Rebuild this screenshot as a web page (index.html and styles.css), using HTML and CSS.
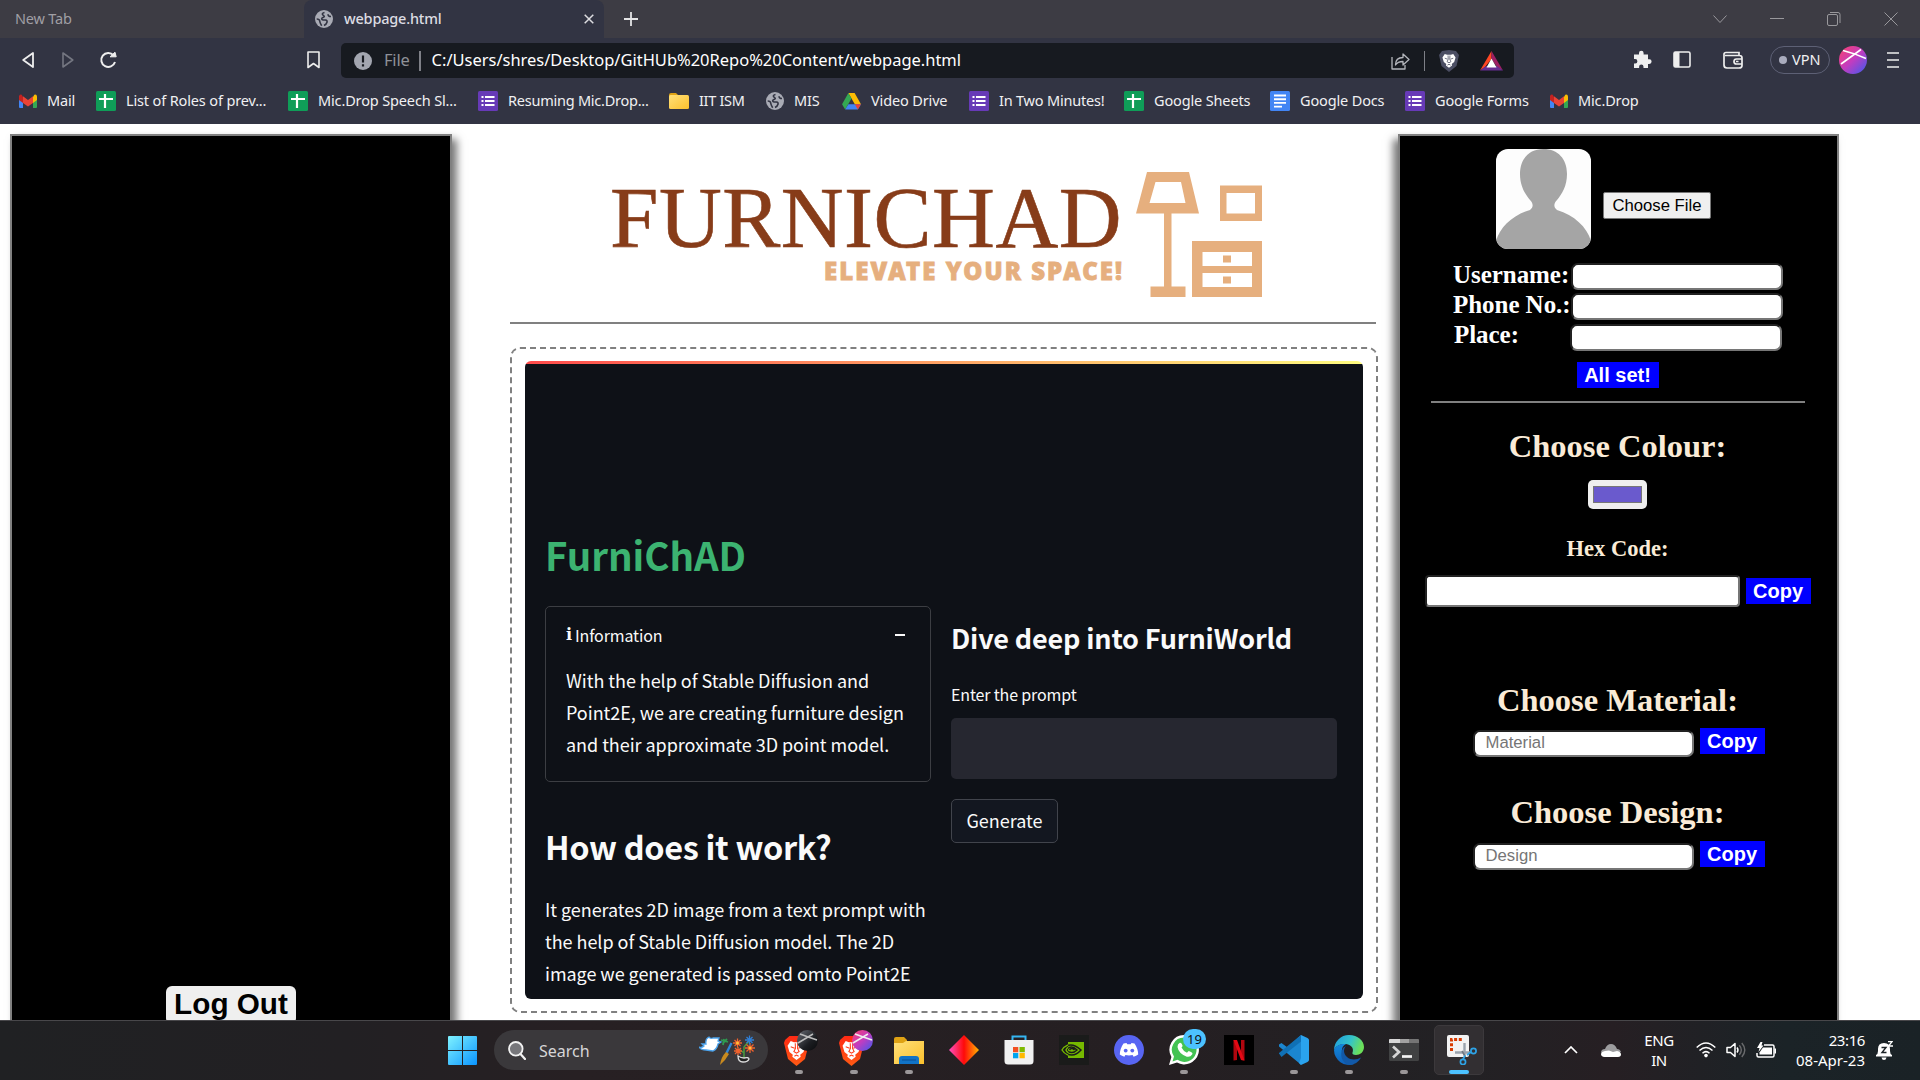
FILE: index.html
```html
<!DOCTYPE html>
<html lang="en">
<head>
<meta charset="utf-8">
<title>webpage.html</title>
<link rel="stylesheet" href="styles.css">
</head>
<body>
<svg class="defs" width="0" height="0">
  <defs>
    <linearGradient id="gWin" x1="0" y1="0" x2="1" y2="1"><stop offset="0" stop-color="#7ff2ff"/><stop offset="1" stop-color="#0a94ff"/></linearGradient>
    <linearGradient id="gPink" x1="0" y1="0" x2="1" y2="1"><stop offset="0.1" stop-color="#f0407c"/><stop offset="0.5" stop-color="#c23cc0"/><stop offset="1" stop-color="#3a5bf0"/></linearGradient>
    <linearGradient id="gDark" x1="0" y1="0" x2="1" y2="1"><stop offset="0" stop-color="#6c7078"/><stop offset="0.6" stop-color="#1c1e22"/><stop offset="1" stop-color="#08090b"/></linearGradient>
    <linearGradient id="gBrave" x1="0" y1="0" x2="0" y2="1"><stop offset="0" stop-color="#ff2a14"/><stop offset="1" stop-color="#ff5a14"/></linearGradient>
    <linearGradient id="gFolder" x1="0" y1="0" x2="1" y2="1"><stop offset="0" stop-color="#ffe07a"/><stop offset="1" stop-color="#fbc02c"/></linearGradient>
    <linearGradient id="gDia" x1="0" y1="0" x2="1" y2="0"><stop offset="0" stop-color="#ff4fc0"/><stop offset="0.5" stop-color="#ff0a0a"/><stop offset="1" stop-color="#ffb400"/></linearGradient>
    <linearGradient id="gEdge" x1="0" y1="0" x2="1" y2="0.3"><stop offset="0" stop-color="#1e9be0"/><stop offset="0.6" stop-color="#35c4c8"/><stop offset="1" stop-color="#6be05a"/></linearGradient>
    <linearGradient id="gEdgeB" x1="0" y1="0" x2="0" y2="1"><stop offset="0" stop-color="#1389dc"/><stop offset="1" stop-color="#0f5fb8"/></linearGradient>
    <symbol id="globe" viewBox="0 0 18 18"><circle cx="9" cy="9" r="9" fill="#a9abb5"/><path d="M9.500 2.500C7 3 6.800 4.300 8.300 5.300S9.500 7 8 7.500 6 9.500 8 10h2.500q2 .3 1.500 2.300T9 15.500M1.700 9q2.800 0 3 2t2 4.800M13 4.200c0 1.500 1 2.300 3 2.300" fill="none" stroke="#323443" stroke-width="1.600"/></symbol>
    <symbol id="gmail" viewBox="0 0 18 14"><path d="M0 2v11q0 1 1 1h3V5z" fill="#4285f4"/><path d="M18 2v11q0 1-1 1h-3V5z" fill="#34a853"/><path d="M0 2.500V6l4 3V3L2.700.7Q.3-.3 0 2.500" fill="#c5221f"/><path d="M18 2.500V6l-4 3V3L15.300.7Q17.700-.3 18 2.500" fill="#fbbc04"/><path d="M4 2.200 9 6l5-3.800V9l-5 3.600L4 9z" fill="#ea4335"/></symbol>
    <symbol id="sheets" viewBox="0 0 20 20"><rect width="20" height="20" rx="1.500" fill="#0f9d58"/><path d="M9 3v14M3 8h14" stroke="#fff" stroke-width="2.200"/></symbol>
    <symbol id="forms" viewBox="0 0 20 20"><rect width="20" height="20" rx="1.500" fill="#673ab7"/><path d="M3.500 6h2M3.500 10h2M3.500 14h2M7 6h9.500M7 10h9.500M7 14h9.500" stroke="#fff" stroke-width="2.200"/></symbol>
    <symbol id="docs" viewBox="0 0 20 20"><rect width="20" height="20" rx="1.500" fill="#4285f4"/><path d="M4 4.500h12M4 8.200h12M4 11.900h12M4 15.600h8" stroke="#fff" stroke-width="1.900"/></symbol>
    <symbol id="folder" viewBox="0 0 20 16"><path d="M0 2Q0 0 2 0h5l2 2v6H0z" fill="#dfa214"/><rect y="2" width="20" height="14" rx="1.500" fill="url(#gFolder)"/></symbol>
    <symbol id="drive" viewBox="0 0 20 18"><path d="M6.700 0h6.600L20 11.800h-6.500z" fill="#fbbc04"/><path d="M6.700 0 10 5.800 3.300 17.600 0 11.800z" fill="#34a853"/><path d="M6.700 11.800H20l-3.300 5.800H3.300z" fill="#4285f4"/><path d="M13.500 11.800H20l-3.300 5.800z" fill="#ea4335"/></symbol>
    <symbol id="lion" viewBox="0 0 20 22"><path d="m4.500 2.500 3 1h5l3-1L18.500 7l-1.800 6-3.200 2.500.5 2L10 20.500l-4-3 .5-2L3.300 13 1.500 7z" fill="#fff"/><path d="m4.500 8 3.700 1.300M15.500 8l-3.700 1.300M8.800 4.500 9 9.500 7.500 12.500 10 14l2.500-1.500-1.500-3 .2-5M8 17l2-1.200 2 1.200" fill="none" stroke="currentColor" stroke-width="1"/></symbol>
    <symbol id="brave" viewBox="0 0 34 36"><path d="M1 10 5.500 6h14L24 10l1 3-4 16-8.500 7L4 29 0 13z" fill="url(#gBrave)"/><svg x="2" y="8" width="21" height="24" viewBox="0 0 20 22" color="#ff3a18"><use href="#lion" width="20" height="22"/></svg></symbol>
  </defs>
</svg>

<header class="browser">
  <div class="tabs">
    <div class="tab tab-idle"><span class="t-newtab">New Tab</span></div>
    <div class="tab tab-active">
      <svg width="18" height="18"><use href="#globe"/></svg>
      <span class="t-title">webpage.html</span>
      <svg class="tab-close" width="10" height="10" viewBox="0 0 10 10"><path d="m.7.7 8.600 8.600M9.300.7.700 9.300" stroke="#dcdce0" stroke-width="1.500"/></svg>
    </div>
    <svg class="tab-add" width="14" height="14" viewBox="0 0 14 14"><path d="M7 0v14M0 7h14" stroke="#e4e4e6" stroke-width="1.800"/></svg>
    <div class="winctl">
      <svg width="14" height="14" viewBox="0 0 14 14"><path d="m.5 3.500 6.500 7 6.500-7"/></svg>
      <svg width="14" height="14" viewBox="0 0 14 14"><path d="M0 6.500h14"/></svg>
      <svg width="14" height="14" viewBox="0 0 14 14"><rect x=".5" y="2.500" width="10" height="11" rx="1.500"/><path d="M3 .5h8q2 0 2 2V11"/></svg>
      <svg width="14" height="14" viewBox="0 0 14 14"><path d="m.5.5 13 13m0-13-13 13"/></svg>
    </div>
  </div>

  <div class="toolbar">
    <svg class="ic-back" width="12" height="18" viewBox="0 0 12 18"><path d="M11 2v14L1.200 9z" fill="none" stroke="#eee" stroke-width="1.800" stroke-linejoin="round"/></svg>
    <svg class="ic-fwd" width="12" height="18" viewBox="0 0 12 18"><path d="M1 2v14l9.800-7z" fill="none" stroke="#747681" stroke-width="1.600" stroke-linejoin="round"/></svg>
    <svg class="ic-reload" width="18" height="18" viewBox="0 0 18 18"><path d="M14.500 4.200A7 7 0 1 0 16 11" fill="none" stroke="#eee" stroke-width="2"/><path d="M11 5.800 16 1.200l1.200 4.600z" fill="#eee" stroke="#eee"/></svg>
    <svg class="ic-mark" width="13" height="18" viewBox="0 0 13 18"><path d="M1 1h11v15.500l-5.500-4-5.500 4z" fill="none" stroke="#eee" stroke-width="1.600" stroke-linejoin="round"/></svg>
    <div class="omnibox">
      <svg width="18" height="18" viewBox="0 0 18 18"><circle cx="9" cy="9" r="9" fill="#a3a6b0"/><path d="M9 3.500v7M9 12.300v2.200" stroke="#171a20" stroke-width="2.200"/></svg>
      <span class="t-file">File</span>
      <i class="bar"></i>
      <span class="t-url">C:/Users/shres/Desktop/GitHUb%20Repo%20Content/webpage.html</span>
      <svg class="ic-share" width="19" height="18" viewBox="0 0 19 18"><path d="M1 5v12h13v-4M4.500 13c0-5 3-7.500 7.500-7.500V2l6 5.500-6 5.500V9.500c-4 0-6 1-7.500 3.500z" fill="none" stroke="#b4b6bc" stroke-width="1.300" stroke-linejoin="round"/></svg>
      <i class="bar thin"></i>
      <svg class="ic-shield" width="20" height="22" viewBox="0 0 20 22" color="#4b4e63"><path d="m3 1 7-1 7 1 3 4-2.500 11L10 22l-7.500-6L0 5z" fill="#4b4e63"/><use href="#lion" x="2" y="2" width="16" height="17"/></svg>
      <svg class="ic-bat" width="23" height="20" viewBox="0 0 23 20"><path d="M11.500 0v8L5 16l-5 3.500z" fill="#ff4724"/><path d="M11.500 0 23 19.500 17 16l-5.500-8z" fill="#9e1f63"/><path d="M0 19.500 6 15h11l6 4.500z" fill="#662d91"/><path d="m11.500 7.500 5 9h-10z" fill="#fff"/></svg>
    </div>
    <div class="actions">
      <svg class="ic-puz" width="19" height="19" viewBox="0 0 19 19"><path d="M1 4.500h5V3a2.300 2.300 0 0 1 4.600 0v1.500H15v4.800h1.300a2.300 2.300 0 0 1 0 4.600H15V18h-4.500v-1.300a2.200 2.200 0 0 0-4.400 0V18H1v-4.500h1.200a2.200 2.200 0 0 0 0-4.400H1z" fill="#efeff0"/></svg>
      <svg class="ic-side" width="18" height="17" viewBox="0 0 18 17"><rect x="1" y="1" width="16" height="15" rx="1.500" fill="none" stroke="#eee" stroke-width="1.600"/><path d="M1 1h5.500v15H1z" fill="#eee"/></svg>
      <svg class="ic-wallet" width="20" height="18" viewBox="0 0 20 18"><path d="M16 4.500V1.500H3Q1 1.500 1 3.200V14q0 3 3 3h12q3 0 3-2.500V7q0-2.500-2.500-2.500H2M19 8h-5.500Q11 8 11 10.500t2.500 2.500H19M13 10.500h2.500" fill="none" stroke="#eee" stroke-width="1.700"/></svg>
      <div class="vpn"><i></i><span class="t-vpn">VPN</span></div>
      <svg class="ic-avatar" width="28" height="28" viewBox="0 0 28 28"><circle cx="14" cy="14" r="14" fill="url(#gPink)"/><path d="M2 18 22 3.500M4 4.500q12 3 23 8" stroke="#fff" stroke-width="1.600" fill="none"/></svg>
      <svg width="12" height="18" viewBox="0 0 12 18"><path d="M0 2h12M0 9h12M0 16h12" stroke="#eee" stroke-width="1.700"/></svg>
    </div>
  </div>

  <nav class="bookmarks">
    <a><svg width="18" height="14"><use href="#gmail"/></svg><span>Mail</span></a>
    <a><svg width="20" height="20"><use href="#sheets"/></svg><span>List of Roles of prev...</span></a>
    <a><svg width="20" height="20"><use href="#sheets"/></svg><span>Mic.Drop Speech Sl...</span></a>
    <a><svg width="20" height="20"><use href="#forms"/></svg><span>Resuming Mic.Drop...</span></a>
    <a><svg width="20" height="16"><use href="#folder"/></svg><span>IIT ISM</span></a>
    <a><svg width="18" height="18"><use href="#globe"/></svg><span>MIS</span></a>
    <a><svg width="19" height="17"><use href="#drive"/></svg><span>Video Drive</span></a>
    <a><svg width="20" height="20"><use href="#forms"/></svg><span>In Two Minutes!</span></a>
    <a><svg width="20" height="20"><use href="#sheets"/></svg><span>Google Sheets</span></a>
    <a><svg width="20" height="20"><use href="#docs"/></svg><span>Google Docs</span></a>
    <a><svg width="20" height="20"><use href="#forms"/></svg><span>Google Forms</span></a>
    <a><svg width="18" height="14"><use href="#gmail"/></svg><span>Mic.Drop</span></a>
  </nav>
</header>

<main class="page">
  <aside class="panel panel-left"><button class="logout">Log Out</button></aside>

  <section class="center">
    <div class="brand">
      <div class="brand-text">
        <div class="brand-name">FURNICHAD</div>
        <div class="brand-tag">ELEVATE YOUR SPACE!</div>
      </div>
      <svg class="brand-art" width="126" height="125" viewBox="0 0 126 125" fill="#e6af7e" fill-rule="evenodd"><path d="M11 0h42l10 41.500H0zM19.500 10l-6 21h36l-4.500-21z"/><path d="M28 41h7.500v73.500h14V125h-35v-10.500H28z"/><path d="M84 13.500h42V49H84zM90.500 21v20.500H119V21z"/><path d="M56 69h70v56H56zM66.500 80v14H116V80zM66.500 101v14H116v-14zM87 83.500h8v7h-8zM87 104.500h8v7h-8z"/></svg>
    </div>
    <hr class="rule">
    <div class="frame">
      <div class="app">
        <h1>FurniChAD</h1>
        <div class="cols">
          <div class="col">
            <div class="card">
              <div class="card-head"><b>i</b><span>Information</span><i class="minus"></i></div>
              <p>With the help of Stable Diffusion and<br>Point2E, we are creating furniture design<br>and their approximate 3D point model.</p>
            </div>
            <h2>How does it work?</h2>
            <p>It generates 2D image from a text prompt with<br>the help of Stable Diffusion model. The 2D<br>image we generated is passed omto Point2E</p>
          </div>
          <div class="col">
            <h3>Dive deep into FurniWorld</h3>
            <label>Enter the prompt</label>
            <div class="textarea"></div>
            <button class="generate">Generate</button>
          </div>
        </div>
      </div>
    </div>
  </section>

  <aside class="panel panel-right">
    <div class="profile">
      <svg class="photo" width="95" height="100" viewBox="0 0 95 100"><rect width="95" height="100" fill="#fdfdfd"/><path d="M47.500 0C62 0 71 10 71 25c0 12-5 20-10 26-3 3-4 7 0 10 17 5 30 17 34 31v8H0v-8c4-14 17-26 34-31 4-3 3-7 0-10-5-6-10-14-10-26C24 10 33 0 47.500 0z" fill="#a5a5a5"/></svg>
      <button class="choose">Choose File</button>
    </div>
    <div class="field"><label>Username:</label><input></div>
    <div class="field"><label>Phone No.:</label><input></div>
    <div class="field place"><label>Place:</label><input></div>
    <button class="blue allset">All set!</button>
    <hr>
    <h2 class="h-colour">Choose Colour:</h2>
    <div class="swatch"><i></i></div>
    <h4>Hex Code:</h4>
    <div class="row row-hex"><input><button class="blue">Copy</button></div>
    <h2 class="h-material">Choose Material:</h2>
    <div class="row"><input placeholder="Material"><button class="blue">Copy</button></div>
    <h2 class="h-design">Choose Design:</h2>
    <div class="row"><input placeholder="Design"><button class="blue">Copy</button></div>
  </aside>
</main>

<footer class="taskbar">
  <svg class="start" width="29" height="29" viewBox="0 0 29 29"><path d="M1 0h13v14H0V1q0-1 1-1zM15 0h13q1 0 1 1v13H15zM0 15h14v14H1q-1 0-1-1zM15 15h14v13q0 1-1 1H15z" fill="url(#gWin)"/></svg>
  <div class="search">
    <svg width="18" height="19" viewBox="0 0 18 19"><circle cx="7.800" cy="7.800" r="6.800" fill="#77777b" stroke="#f2f2f2" stroke-width="1.800"/><path d="m12.500 13 4.500 5" stroke="#f2f2f2" stroke-width="2.200" stroke-linecap="round"/></svg>
    <span class="t-search">Search</span>
    <svg class="art" width="57" height="31" viewBox="0 0 57 31"><path d="M0 12q3 1 5-1l-2-2 4 0q-1-5 3-7 1 2 4 1l6 0-1 3 3 1-3 2q-1 5-5 7l-7-1q-5 0-7-3z" fill="#fff" stroke="#4ba3ec" stroke-width="1.300"/><path d="m22 5 7 2M25 4l-1 6M28 4l-4 4" stroke="#2e9a50" stroke-width="1.800"/><path d="m32.500 8-5 10" stroke="#2f86d8" stroke-width="2.400"/><path d="m27 17 3 2-4 6-5 5q1-8 6-13" fill="#c98a1e"/><path d="M45 25V12l5-6M45 18l-5-4" stroke="#4b9a3c" stroke-width="1.500" fill="none"/><path d="M34 8h9M38.500 3.500v9M35.500 5l6 6M41.500 5l-6 6M35 16h8M39 12v8M36 13l6 6M42 13l-6 6M46 13h10M51 8v10M47.500 9.500l7 7M54.500 9.500l-7 7" stroke="#f0622d" stroke-width="1.300"/><path d="M46 5h9M50.500.5v9M47.500 2l6 6M53.500 2l-6 6" stroke="#2f7fd6" stroke-width="1.300"/><circle cx="38.500" cy="8" r="1.500" fill="#ffc23a"/><circle cx="51" cy="13" r="1.500" fill="#ffc23a"/><path d="M39 21q0 6 5 6t6-3q0-2-5-1-3 0-6-2z" fill="#222" stroke="#ddd" stroke-width="1.300"/></svg>
  </div>
  <div class="apps">
    <div class="app-ic run"><svg width="34" height="36"><use href="#brave"/><circle cx="23.500" cy="10.500" r="10.500" fill="url(#gDark)"/><path d="M14 13 29 4M16 4q8 3 17 6" stroke="#bbb" stroke-width="1.500" fill="none"/></svg></div>
    <div class="app-ic run"><svg width="34" height="36"><use href="#brave"/><circle cx="23.500" cy="10.500" r="10.500" fill="url(#gPink)"/><path d="M14 13 29 4M16 4q8 3 17 6" stroke="#eee" stroke-width="1.500" fill="none"/></svg></div>
    <div class="app-ic run"><svg width="30" height="27" viewBox="0 0 30 27"><path d="M0 2Q0 0 2 0h8l3 3v6H0z" fill="#dfa214"/><path d="M0 6h9l3-2h18v23H0z" fill="url(#gFolder)"/><path d="M5 27v-5q0-3 3-3h14q3 0 3 3v5z" fill="#1173c7"/><path d="M8 23h14" stroke="#0b4f93"/></svg></div>
    <div class="app-ic"><svg width="30" height="30"><path d="M15 0 30 15 15 30 0 15z" fill="url(#gDia)"/></svg></div>
    <div class="app-ic"><svg width="30" height="30" viewBox="0 0 30 30"><path d="M8.500 6V1.500h13V6" fill="none" stroke="#35b6f2" stroke-width="2"/><path d="M.5 5h29v21q0 3.500-3.500 3.500H4Q.5 29.500.5 26z" fill="#f1f1f1"/><path fill="#f25022" d="M9 12h5.300v5.300H9z"/><path fill="#7fba00" d="M15.500 12h5.300v5.300h-5.300z"/><path fill="#00a4ef" d="M9 18h5.300v5.300H9z"/><path fill="#ffb900" d="M15.500 18h5.300v5.300h-5.300z"/></svg></div>
    <div class="app-ic"><svg width="30" height="30" viewBox="0 0 30 30"><path fill="#1a1b1a" d="M0 0h30v30H0z"/><path d="M9 7h16v16H9z" fill="#76b900"/><path d="M3 15q8-10 19 0-9 10-19 0zM7 15q5-6 11 0-5 5-11 0zM10.500 15q2-3 5 0" fill="none" stroke="#1a1b1a" stroke-width="1.500"/><path d="M9 9.800Q5 11.500 3 15q2 3.500 6 5.200M9 12.200Q7.500 13.500 7 15q.5 1.500 2 2.600" fill="none" stroke="#76b900" stroke-width="1.400"/></svg></div>
    <div class="app-ic"><svg width="30" height="30" viewBox="0 0 30 30"><circle cx="15" cy="15" r="15" fill="#5865f2"/><path d="M9.500 8.500 12.500 8l.8 1.300h3.400l.8-1.300 3 .5q3.500 5 3.700 11-2 1.500-4.600 2.200l-1-1.700q-3.600.8-7.200 0l-1 1.700Q7.800 21 5.800 19.500q.2-6 3.700-11z" fill="#fff"/><circle cx="11.700" cy="15.600" r="1.900" fill="#5865f2"/><circle cx="18.300" cy="15.600" r="1.900" fill="#5865f2"/></svg></div>
    <div class="app-ic run"><svg width="30" height="30" viewBox="0 0 30 30"><path d="M15.300 0A14.700 14.700 0 1 1 8 27.500L0 30l2.400-8A14.700 14.700 0 0 1 15.300 0z" fill="#fff"/><path d="M15.300 2.500a12.200 12.200 0 1 1-6.800 22.300L3.500 26.400 5 21.600A12.200 12.200 0 0 1 15.300 2.500z" fill="#43c352"/><path d="M10.500 8q2-.8 3 2.500.2 1-1 2 2 4 5.500 5.200 1.500-2 2.300-1.500 4 1.600 3 3-2 3.300-5.500 2.500Q9.500 18.500 8.500 12q0-3 2-4z" fill="#fff"/></svg><span class="badge">19</span></div>
    <div class="app-ic"><svg width="30" height="30" viewBox="0 0 30 30"><path d="M0 0h30v30H0z"/><path d="M9.500 5h3.500v20l-3.500.5zM17 5h3.500v20.500L17 25z" fill="#b1060f"/><path d="M9.500 5H13l7.500 20.500L17 25z" fill="#e50914"/></svg></div>
    <div class="app-ic run"><svg width="30" height="30" viewBox="0 0 30 30"><path d="M22 0 8.500 12.500 2.500 8 0 9.500v2L20 28l2 2z" fill="#1b86d0"/><path d="M0 18.500 2.500 22 22 6.500V0L0 18z" fill="#1070b5"/><path d="m22 0 6.500 3q1.500 1 1.500 2v20q0 1-1.500 2L22 30l-2-2 2-5V7z" fill="#2aa3ee"/></svg></div>
    <div class="app-ic run"><svg width="30" height="30" viewBox="0 0 30 30"><path d="M0 15A15 15 0 0 1 15 0c9 0 15 6 15 12 0 5-4 8-8 8-3 0-4-1-3.500-2.500C20 14 18 10 12 9 6 8.500 2 11 0 15z" fill="url(#gEdge)"/><path d="M0 15C2 10 7 8.500 12 9c-4 2-5 6-3.500 10.500C10 25 15 29 20 29A15 15 0 0 1 0 15z" fill="url(#gEdgeB)"/><path d="M12 11c-3 3-2.500 8 1 11 4 3.500 10 3 14 .5C25 27 20 30 15 30 8 28 5 20 9 13z" fill="#1259a8"/></svg></div>
    <div class="app-ic run"><svg width="30" height="22" viewBox="0 0 30 22"><rect width="30" height="22" rx="1.500" fill="#414243"/><path d="M0 4V1q0-1 1-1h10v4z" fill="#d8d8d8"/><path d="M11 0h9v4h-9z" fill="#a2a2a2"/><path d="M20 0h9q1 0 1 1v3H20z" fill="#757575"/><path d="m4 7.500 6 5.500-6 5.500" fill="none" stroke="#d5d5d5" stroke-width="2.700"/><path d="M13 17.500h10" stroke="#f4f4f4" stroke-width="2.700"/></svg></div>
    <div class="app-ic active"><svg width="30" height="30" viewBox="0 0 30 30"><rect width="22" height="22" rx="2" fill="#f3f3f3"/><path d="M4.500 16V4.500H16" fill="none" stroke="#d83b01" stroke-width="3" stroke-dasharray="3 1.700"/><path d="M17.500 8v12.500M8 17.500h15" stroke="#9aa3ad" stroke-width="2.400"/><path d="m15 16 3.500 6" stroke="#6e7780" stroke-width="1.500"/><circle cx="26.500" cy="16" r="2.600" fill="none" stroke="#2ea3e6" stroke-width="1.700"/><circle cx="16" cy="27" r="2.600" fill="none" stroke="#2ea3e6" stroke-width="1.700"/><path d="m20 20 4-3M16 24.500l2-4" stroke="#2ea3e6" stroke-width="1.700"/></svg></div>
  </div>
  <div class="tray">
    <svg class="tr-up" width="14" height="8" viewBox="0 0 14 8"><path d="m1 7 6-6 6 6" fill="none" stroke="#fff" stroke-width="1.700"/></svg>
    <svg class="tr-cloud" width="20" height="13" viewBox="0 0 20 13"><path d="M3 11Q0 10 0 8q.5-3 4-3Q6 0 10 0t6 5q3 0 4 3z" fill="#9c9c9e"/><path d="M3.500 13Q0 12.500 0 10q.5-2.500 4-3l4-.5 4 1.500 4-1q4 .5 4 3.500 0 2-3 2.500z" fill="#fff"/></svg>
    <div class="lang"><span>ENG</span><span>IN</span></div>
    <svg class="tr-wifi" width="20" height="16" viewBox="0 0 20 16"><g fill="none" stroke="#fff" stroke-width="1.500"><path d="M.7 5.500q9.300-9 18.600 0M3.500 8.500q6.500-6 13 0M6.500 11.300q3.500-3.300 7 0"/></g><circle cx="10" cy="13.600" r="1.800" fill="#fff"/></svg>
    <svg class="tr-vol" width="20" height="18" viewBox="0 0 20 18"><path d="M1 6.500h3.500L9 2.500v13l-4.500-4H1z" fill="none" stroke="#fff" stroke-width="1.500" stroke-linejoin="round"/><path d="M11 6.500q2 2.500 0 5" fill="none" stroke="#fff" stroke-width="1.400"/><path d="M13.300 4.300q4 4.700 0 9.400M15.800 2q6 7 0 14" fill="none" stroke="#6a6b6d" stroke-width="1.400"/></svg>
    <svg class="tr-bat" width="20" height="16" viewBox="0 0 20 16"><path d="M8 3h8.500q1.500 0 1.500 1.500v9q0 1.500-1.500 1.500h-14Q1 15 1 13.500V11" fill="none" stroke="#fff" stroke-width="1.500"/><path d="M7 5.500h9v7H3.500v-2z" fill="#fff"/><path d="M18.500 6.500H20v5h-1.500zM4.500 0h2L5.500 3.500h2L2.500 10l1-4H1z" fill="#fff"/></svg>
    <div class="clock"><span class="t-time">23:16</span><span>08-Apr-23</span></div>
    <svg class="tr-bell" width="17" height="19" viewBox="0 0 17 19"><path d="M0 14q2-1 2-4V8q0-6 6-6t6 6v2q0 3 2 4v1.500H0zM5.500 16.500h5Q10 19 8 19t-2.500-2.500z" fill="#fff"/><path d="M12 .7h4L12.500 5H17" fill="none" stroke="#fff" stroke-width="1.300"/><path d="M5.500 6.500h4.500L6 11.500h4.500" fill="none" stroke="#1b2226" stroke-width="1.400"/></svg>
  </div>
</footer>
</body>
</html>
```
FILE: styles.css
```css
* { box-sizing: border-box; }
body { margin: 0; width: 1920px; height: 1080px; overflow: hidden; display: flex; flex-direction: column; background: #fff; font-family: "Noto Sans", "Open Sans", sans-serif; }
svg { display: block; flex: none; }
.defs { position: absolute; }
button, input { font-family: "Liberation Sans", Arial, sans-serif; margin: 0; }
h1, h2, h3, h4, p { margin: 0; }
span { white-space: nowrap; }

/* browser chrome */
.browser { flex: none; height: 124px; background: #323443; color: #f0f0f2; }
.browser span { padding-bottom: 2px; }
.tabs { display: flex; align-items: center; height: 38px; background: #3d3c44; }
.tab { display: flex; align-items: center; height: 38px; font-size: 14.5px; letter-spacing: -0.2px; }
.tab-idle { width: 304px; padding-left: 15px; color: #a09fa5; }
.tab-active { width: 300px; padding: 0 10px 0 11px; background: #323443; border-radius: 8px 8px 0 0; color: #dcdce2; font-weight: 500; }
.tab-active .t-title { margin-left: 11px; }
.tab-close { margin-left: auto; }
.tab-add { margin-left: 20px; }
.winctl { display: flex; gap: 43px; margin-left: auto; padding-right: 22px; fill: none; stroke: #99989c; }
.toolbar { display: flex; align-items: center; height: 45px; }
.toolbar > svg, .actions { position: relative; top: -1px; }
.ic-back { margin-left: 22px; }
.ic-fwd { margin-left: 28px; }
.ic-reload { margin-left: 25px; }
.ic-mark { margin-left: 190px; }
.omnibox { display: flex; align-items: center; width: 1173px; height: 35px; margin-left: 21px; padding: 0 11px 0 13px; border-radius: 5px; background: #171a20; font-size: 16.500px; letter-spacing: -0.02px; color: #fff; }
.t-file { margin-left: 12px; color: #8f9198; letter-spacing: -0.2px; }
.bar { width: 2px; height: 20px; margin: 0 11px 0 9px; background: #7e8087; }
.bar.thin { width: 1px; margin: 0 14px; }
.ic-share { margin-left: auto; }
.ic-bat { margin-left: 21px; }
.actions { display: flex; align-items: center; margin-left: 119px; }
.ic-side { margin-left: 21px; }
.ic-wallet { margin-left: 32px; }
.vpn { display: flex; align-items: center; gap: 5px; width: 60px; height: 28px; margin-left: 27px; padding-left: 8px; border: 1px solid #5d6075; border-radius: 14px; font-size: 14.500px; }
.vpn i { width: 8px; height: 8px; border-radius: 50%; background: #a9acbd; }
.ic-avatar { margin: 0 20px 0 9px; }
.bookmarks { display: flex; align-items: center; height: 36px; padding-left: 19px; font-size: 14.500px; letter-spacing: -0.14px; }
.bookmarks a { display: flex; align-items: center; gap: 10px; flex: none; }
.bookmarks a:nth-child(1) { width: 77px; }
.bookmarks a:nth-child(2) { width: 192px; }
.bookmarks a:nth-child(3) { width: 190px; }
.bookmarks a:nth-child(4) { width: 191px; letter-spacing: -0.24px; }
.bookmarks a:nth-child(5) { width: 97px; letter-spacing: -0.3px; }
.bookmarks a:nth-child(6) { width: 76px; }
.bookmarks a:nth-child(7) { width: 127px; }
.bookmarks a:nth-child(8) { width: 155px; letter-spacing: -0.2px; }
.bookmarks a:nth-child(9) { width: 146px; }
.bookmarks a:nth-child(10) { width: 135px; }
.bookmarks a:nth-child(11) { width: 145px; }

/* page */
.page { flex: none; display: flex; height: 896px; padding: 10px 0 0 10px; overflow: hidden; }
.panel { flex: none; height: 1100px; border: 2px solid gray; background: #000; }
.panel-left { width: 442px; padding: 850px 0 0 154px; box-shadow: 5px 5px 8px #777; }
.logout { display: block; width: 130px; height: 38px; padding: 0; border: 0; border-radius: 6px; background: #efefef; color: #000; font-size: 29.700px; font-weight: bold; line-height: 34px; }
.logout { padding-bottom: 3px; }
.center { flex: none; width: 868px; margin: 0 20px 0 58px; }
.brand { display: flex; height: 188px; padding: 38px 0 0 100px; }
.brand-text { width: 513px; }
.brand-name { height: 88px; padding-top: 3px; font: 87px/85px "Liberation Serif", serif; letter-spacing: 0.5px; color: #873c19; -webkit-text-stroke: 0.6px #873c19; }
.brand-tag { margin: -3px -1px 0 0; text-align: right; font: 900 24px/28px "Noto Sans", sans-serif; letter-spacing: 2.050px; color: #e6af7e; -webkit-text-stroke: 0.8px #e6af7e; }
.brand-art { margin-left: 13px; }
.rule { width: 866px; height: 2px; margin: 0 0 23px; border: 0; background: gray; }
.frame { height: 666px; padding: 12px 13px; border: 2px dashed gray; border-radius: 10px; }
.app { height: 638px; padding: 165px 26px 0 20px; border-radius: 6px; overflow: hidden; background: linear-gradient(90deg, #ff4b4b, #fffd80) 0 0 / 100% 3px no-repeat, #0e1117; color: #fafafa; font-family: "Noto Sans CJK SC", "Noto Sans CJK JP", sans-serif; font-size: 18px; line-height: 32px; letter-spacing: -0.045px; }
.app h1 { height: 80px; padding-top: 3px; font-size: 38.500px; line-height: 50px; color: #3cb371; }
.cols { display: grid; grid-template-columns: 386px 386px; gap: 20px; }
.card { height: 176px; padding: 0 20px; border: 1px solid #3c3e43; border-radius: 5px; }
.card-head { display: flex; align-items: center; height: 57px; padding-bottom: 2px; font-size: 16px; letter-spacing: -0.12px; }
.card-head b { margin-right: 3px; font: bold 16px "DejaVu Serif", serif; }
.minus { width: 10px; height: 2px; margin: 1px 5px 0 auto; background: #fafafa; }
.col h2 { height: 111px; padding-top: 44px; font-size: 32.500px; line-height: 40px; font-weight: 600; letter-spacing: -0.350px; white-space: nowrap; }
.col h3 { height: 76px; padding-top: 15px; font-size: 27px; line-height: 34px; font-weight: 600; letter-spacing: -0.170px; white-space: nowrap; }
.col label { display: block; height: 36px; font-size: 16px; line-height: 24px; letter-spacing: -0.15px; }
.textarea { height: 61px; border-radius: 5px; background: #262730; }
.generate { display: block; width: 107px; height: 44px; margin-top: 20px; padding: 0 0 2px; border: 1px solid #41444c; border-radius: 5px; background: #131720; color: #fafafa; font: 18px/38px "Noto Sans CJK SC", sans-serif; }

/* right panel */
.panel-right { width: 441px; display: flex; flex-direction: column; align-items: center; padding: 13px 2px 0 0; box-shadow: -5px 5px 8px #777; color: #fff; font: bold 25px/30px "Liberation Serif", serif; }
.profile { display: flex; align-items: center; gap: 12px; align-self: flex-start; height: 100px; margin: 0 0 11px 96px; }
.photo { border-radius: 12px; }
.choose { width: 108px; height: 27px; margin-top: 13px; padding: 0; border: 1px solid #767676; border-radius: 2px; background: #efefef; color: #000; font-size: 16.700px; }
.panel-right input { display: block; padding: 0 11px; border: 2px inset #767676; border-radius: 7px; background: #fff; font-size: 16.700px; }
.field { display: flex; align-self: flex-start; height: 30px; margin-left: 53px; letter-spacing: -0.05px; }
.field label { width: 118px; line-height: 29px; white-space: nowrap; }
.field input { width: 212px; height: 27px; margin-top: 3px; }
.place label { width: 117px; padding-left: 1px; }
.place input { margin-top: 4px; }
.blue { display: block; width: 65px; height: 26px; padding: 0; border: 0; background: #00f; color: #fff; font-size: 20px; font-weight: bold; line-height: 24px; }
.allset { width: 82px; margin-top: 12px; }
.panel-right hr { width: 374px; height: 2px; margin: 13px 0 0; border: 0; background: gray; }
.panel-right h2 { font-size: 32.500px; line-height: 36px; color: #faebd7; }
.h-colour { margin-top: 25px; }
.swatch { width: 59px; height: 29px; margin-top: 16px; padding: 6px 5px; border-radius: 5px; background: #efefef; }
.swatch i { display: block; height: 17px; border: 1px solid #777; background: #6a5acd; }
.panel-right h4 { margin-top: 27px; font-size: 22.500px; line-height: 26px; color: #faebd7; }
.row { display: flex; gap: 6px; height: 28px; margin-left: 2px; }
.row input { width: 221px; height: 27px; margin-top: 1px; }
.row-hex { align-items: center; height: 32px; margin: 13px 0 0; }
.row-hex input { width: 315px; height: 32px; margin: 0; border-radius: 4px; }
.h-material { margin-top: 75px; margin-bottom: 10px; }
.row:not(.row-hex) input { margin-top: 2px; padding-bottom: 2px; }
.h-design { margin-top: 38px; margin-bottom: 11px; }

/* taskbar */
.taskbar { position: relative; flex: none; display: flex; height: 60px; border-top: 1px solid #48474a; background: linear-gradient(90deg, #202123 0%, #222023 18%, #272023 30%, #251f22 60%, #222124 76%, #261f23 84%, #1b2327 93%, #1a2226 100%); color: #fff; }
.start { margin: 15px 17px 0 448px; }
.search { display: flex; align-items: center; width: 274px; height: 40px; margin-top: 9px; padding-left: 14px; border-radius: 20px; background: #3a383b; font-size: 16px; color: #d6d6d7; }
.t-search { margin-left: 13px; padding-top: 1px; }
.art { margin-left: auto; margin-right: 12px; }
.apps { display: flex; margin-left: 3px; }
.app-ic { position: relative; display: flex; align-items: center; justify-content: center; width: 55px; height: 58px; }
.app-ic:nth-child(-n+2) { padding: 0 0 4px 5px; }
.run::after { content: ""; position: absolute; left: 24px; top: 49px; width: 8px; height: 4px; border-radius: 2px; background: #9b9799; }
.active { width: 50px; height: 50px; margin: 4px 0 0 3px; padding: 0 0 0 5px; border: 1px solid #3c393c; border-radius: 5px; background: #322f32; }
.active::after { content: ""; position: absolute; left: 14px; top: 44px; width: 20px; height: 4px; border-radius: 2px; background: #4cc2ff; }
.badge { position: absolute; left: 27px; top: 8px; width: 23px; height: 20px; border-radius: 10px; background: #4cc2ff; color: #111; font-size: 13px; line-height: 20px; text-align: center; }
.tray { display: flex; align-items: center; flex: 1; height: 58px; margin-left: 80px; font-size: 15px; line-height: 20px; }
.lang { width: 46px; text-align: center; display: grid; letter-spacing: -0.4px; }
.tr-cloud { margin: 0 15px 0 23px; }
.tr-wifi { margin-left: 14px; }
.tr-vol { margin: 0 10px; }
.clock { display: grid; width: 89px; text-align: right; }
.t-time { letter-spacing: -0.4px; }
.tr-bell { margin-left: 11px; }
```
